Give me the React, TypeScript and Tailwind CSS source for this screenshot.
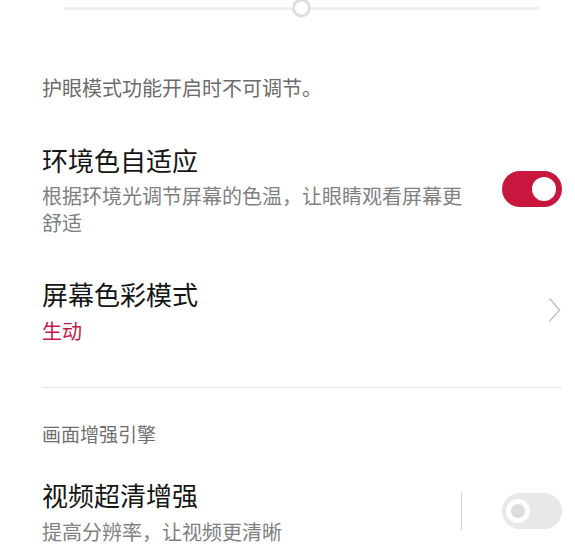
import React from "react";

const font = { fontFamily: '"Noto Sans CJK SC", "Noto Sans", sans-serif' };

function Toggle({ on }: { on: boolean }) {
  if (on) {
    return (
      <div className="flex h-[36px] w-[60px] shrink-0 items-center justify-end rounded-full bg-[#c8173f] pr-[6px]">
        <div className="h-[24px] w-[24px] rounded-full bg-white" />
      </div>
    );
  }
  return (
    <div className="flex h-[36px] w-[60px] shrink-0 items-center rounded-full bg-[#e8e8e8] pl-[4px]">
      <div className="flex h-[24px] w-[24px] items-center justify-center rounded-full bg-white">
        <div className="h-[14px] w-[14px] rounded-full bg-[#dcdcdc]" />
      </div>
    </div>
  );
}

export default function App() {
  return (
    <div className="min-h-screen overflow-hidden bg-white pl-[42px] pr-[13px]" style={font}>
      {/* slider */}
      <div className="-mt-[1px] flex h-[18px] items-center pl-[22px] pr-[22px]">
        <div className="relative h-[3px] w-full rounded-full bg-[#efefef]">
          <div className="absolute left-[228px] top-1/2 h-[19px] w-[19px] -translate-y-1/2 rounded-full border-[3px] border-[#dedede] bg-white" />
        </div>
      </div>

      <p className="mt-[57px] text-[20px] leading-[28px] text-[#6b6b6b]">护眼模式功能开启时不可调节。</p>

      {/* ambient color */}
      <div className="mt-[40px] flex items-center">
        <div className="w-[430px]">
          <div className="text-[26px] leading-[36px] text-[#151515]">环境色自适应</div>
          <div className="mt-[4px] text-[20px] leading-[27px] text-[#808080]">
            根据环境光调节屏幕的色温，让眼睛观看屏幕更舒适
          </div>
        </div>
        <div className="ml-auto">
          <Toggle on />
        </div>
      </div>

      {/* color mode */}
      <div className="mt-[40px] flex items-center">
        <div>
          <div className="text-[26px] leading-[36px] text-[#151515]">屏幕色彩模式</div>
          <div className="mt-[5px] text-[20px] leading-[27px] text-[#c2184a]">生动</div>
        </div>
        <svg className="ml-auto mr-px" width="13" height="26" viewBox="0 0 13 26" fill="none">
          <polyline points="1.5,1.5 11.5,13 1.5,24.5" stroke="#c4c4c4" strokeWidth="1.6" />
        </svg>
      </div>

      <div className="mt-[43px] h-px bg-[#e3e3e3]" />

      <div className="mt-[32px] text-[19px] leading-[27px] text-[#6e6e6e]">画面增强引擎</div>

      {/* video enhance */}
      <div className="mt-[30px] flex items-center">
        <div>
          <div className="text-[26px] leading-[36px] text-[#151515]">视频超清增强</div>
          <div className="mt-[5px] text-[20px] leading-[27px] text-[#808080]">提高分辨率，让视频更清晰</div>
        </div>
        <div className="ml-auto flex items-center">
          <div className="mr-[40px] h-[38px] w-px bg-[#d6d6d6]" />
          <Toggle on={false} />
        </div>
      </div>
    </div>
  );
}
